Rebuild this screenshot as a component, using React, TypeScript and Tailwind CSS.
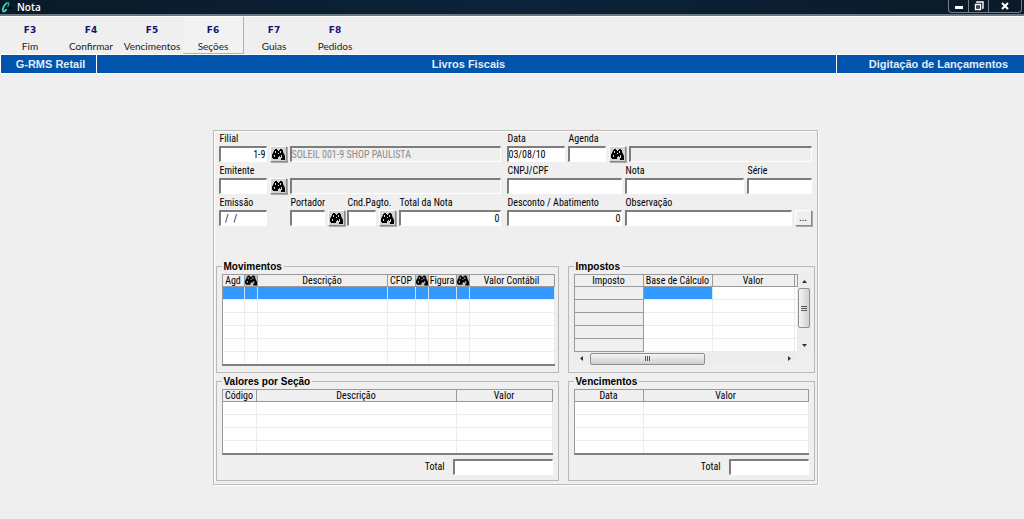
import type { ReactNode } from "react";

const actions = [
  { shortcut: "F3", label: "Fim" },
  { shortcut: "F4", label: "Confirmar" },
  { shortcut: "F5", label: "Vencimentos" },
  { shortcut: "F6", label: "Seções", raised: true },
  { shortcut: "F7", label: "Guias" },
  { shortcut: "F8", label: "Pedidos" },
];

const Binoculars = () => (
  <svg viewBox="0 0 13 11" className="block h-[11px] w-[13px]" aria-hidden="true">
    <path
      d="M3 0h2v1h1v1h1V1h1V0h2v1h1v2l1 2 1 2v4H9V8H8V7H7v1H6v2H1V9H0V6l1-2 1-2V1h1z"
      fill="#000"
    />
    <path
      d="M3.500 2v2M8.500 2v2M2.500 6v2M9.500 6v3M6 4.500h1"
      stroke="#d8d8d8"
      strokeWidth="1"
      fill="none"
    />
  </svg>
);

const SearchButton = ({ label }: { label: string }) => (
  <button
    type="button"
    aria-label={label}
    className="flex h-4 w-[17px] shrink-0 items-center justify-center border border-t-white border-l-white border-r-[#8a8a8a] border-b-[#8a8a8a] bg-[#d2d2d2] shadow-[1px_1px_0_#aaa]"
  >
    <Binoculars />
  </button>
);

type FieldProps = {
  id: string;
  label?: string;
  name?: string;
  value?: string;
  className?: string;
  right?: boolean;
  disabled?: boolean;
};

const Field = ({ id, label, name, value, className, right, disabled }: FieldProps) => (
  <div className={`flex min-w-0 flex-col ${className}`}>
    {label && (
      <label htmlFor={id} className="h-[13px] pl-px leading-3 whitespace-nowrap">
        {label}
      </label>
    )}
    <input
      id={id}
      aria-label={label ? undefined : name}
      defaultValue={value}
      disabled={disabled}
      className={`h-4 w-full min-w-0 border-t-2 border-l-2 border-r border-b border-t-[#7d7d7d] border-l-[#7d7d7d] border-r-white border-b-white leading-3 outline-none ${
        right ? "text-right" : "text-left"
      } ${disabled ? "bg-[#efefef] text-[#8c8c8c]" : "bg-white"}`}
    />
  </div>
);

const Group = ({ title, children, className }: { title: string; children: ReactNode; className: string }) => (
  <fieldset className={`min-w-0 border border-[#b9b9b9] px-[5px] pt-0.5 ${className}`}>
    <legend className="bg-[#efefef] px-0.5 font-[Liberation_Sans,sans-serif] text-[10px] leading-[11px] font-bold">
      {title}
    </legend>
    {children}
  </fieldset>
);

type GridProps = {
  name: string;
  columns: { title: string; width: string; search?: boolean }[];
  rows: number;
  selectedRow?: boolean;
  selectedCell?: boolean;
};

const Grid = ({ name, columns, rows, selectedRow, selectedCell }: GridProps) => (
  <table
    aria-label={name}
    className="w-full table-fixed border-separate border-spacing-0 border-t border-l border-[#9a9a9a] bg-white"
  >
    <thead>
      <tr>
        {columns.map((c, i) => (
          <th
            key={i}
            className={`h-3 border-r border-b border-[#9a9a9a] bg-[#efefef] p-0 text-center leading-[11px] font-normal whitespace-nowrap ${c.width}`}
          >
            {c.search ? (
              <button type="button" aria-label="Pesquisar" className="flex h-[11px] w-full justify-center bg-[#c8c8c8]">
                <Binoculars />
              </button>
            ) : (
              c.title
            )}
          </th>
        ))}
      </tr>
    </thead>
    <tbody>
      {Array.from({ length: rows }).map((_, r) => (
        <tr key={r}>
          {columns.map((_, i) => {
            let style = "border-[#ececec]";
            if (r === 0 && (selectedRow || (selectedCell && i === 1))) {
              style = "border-r-[#cfe4fb] border-b-[#ececec] bg-[#3399ff]";
            } else if (selectedCell && i === 0) {
              style = "border-[#9a9a9a] bg-[#efefef]";
            }
            const last = r === rows - 1 && !selectedCell;
            return (
              <td key={i} className={`border-r p-0 ${last ? "h-3" : "h-[13px] border-b"} ${style}`} />
            );
          })}
        </tr>
      ))}
    </tbody>
  </table>
);

const Total = ({ id, width }: { id: string; width: string }) => (
  <div className="mt-1 flex items-center justify-end gap-2">
    <label htmlFor={id}>Total</label>
    <input
      id={id}
      className={`h-4 border-t-2 border-l-2 border-r border-b border-t-[#7d7d7d] border-l-[#7d7d7d] border-r-white border-b-white bg-white outline-none ${width}`}
    />
  </div>
);

const Arrow = ({ d }: { d: string }) => (
  <svg viewBox="0 0 7 7" className="h-[7px] w-[7px] shrink-0" aria-hidden="true">
    <path d={d} fill="#333" />
  </svg>
);

const TitleBar = () => (
  <header className="flex h-[17px] items-start border-b border-white bg-[#0b1d2e] bg-linear-to-r from-[#0a1a29] via-[#0b2338] to-[#0a1a29] text-white">
    <div className="flex h-4 w-full items-start border-b-2 border-[#6c7780]">
      <svg viewBox="0 0 12 14" className="ml-px h-[14px] w-3" aria-hidden="true">
        <path d="M6 3C4 4 1 8 2 11c1 1 3 0 3-2" fill="none" stroke="#35dcc0" strokeWidth="1.8" />
        <path d="M6 3c2-1 2 1 1 4" fill="none" stroke="#1fb39e" strokeWidth="1.5" />
        <path d="M8 5l4 4H7z" fill="#02080c" />
      </svg>
      <span className="ml-1 text-[10px] leading-[15px] font-semibold">Nota</span>
      <div className="mr-0.5 ml-auto flex h-[13px] rounded-b-sm border border-t-0 border-[#71808c]">
        <button type="button" aria-label="Minimizar" className="flex w-5 items-center justify-center border-r border-[#71808c]">
          <svg viewBox="0 0 10 10" className="h-[10px] w-[10px]">
            <path d="M1 5h8v3H1z" fill="#fff" />
          </svg>
        </button>
        <button type="button" aria-label="Restaurar" className="flex w-5 items-center justify-center border-r border-[#71808c]">
          <svg viewBox="0 0 10 10" className="h-[10px] w-[10px]">
            <path d="M3 2V1h6v6H8M1.500 3.500h5v5h-5z" fill="none" stroke="#fff" strokeWidth="1.4" />
            <path d="M3.500 5.500h1v1h-1z" fill="#fff" />
          </svg>
        </button>
        <button type="button" aria-label="Fechar" className="flex w-8 items-center justify-center">
          <svg viewBox="0 0 10 10" className="h-[10px] w-[10px]">
            <path d="M2 2l6 6M8 2L2 8" stroke="#fff" strokeWidth="2" />
          </svg>
        </button>
      </div>
    </div>
  </header>
);

const App = () => {
  return (
    <div className="min-h-screen bg-[#efefef] font-[Open_Sans,sans-serif] text-black">
      <TitleBar />

      <nav className="flex h-[37px]">
        {actions.map((a) => (
          <button
            key={a.shortcut}
            type="button"
            className={`flex w-[61px] flex-col items-center border-r border-b pt-[7px] text-[#222] ${
              a.raised ? "border-[#b0b0b0] bg-[#f2f2f2]" : "border-transparent"
            }`}
          >
            <span className="font-[DejaVu_Sans,sans-serif] text-[9px] leading-3 font-bold text-[#14146e]">
              {a.shortcut}
            </span>
            <span className="mt-1 font-[Lato,sans-serif] text-[10px] leading-3">{a.label}</span>
          </button>
        ))}
      </nav>

      <div className="flex h-5 border-y border-white bg-[#0054ab] text-center font-[Liberation_Sans,sans-serif] text-[11px] leading-[19px] font-bold text-[#e2ecf8]">
        <div className="w-[97px] border-x border-white pl-1">G-RMS Retail</div>
        <div className="flex-1 pl-1">Livros Fiscais</div>
        <div className="w-[188px] border-l border-white pl-4">Digitação de Lançamentos</div>
      </div>

      <main className="flex justify-center pt-14 pl-1.5 font-[Roboto_Condensed,Lato,sans-serif] text-[10px] leading-3">
        <form className="w-full max-w-[605px] border border-[#b9b9b9] px-0.5 pt-0.5 pb-[3px] shadow-[1px_1px_0_#fff,inset_1px_1px_0_#fff]">
          <div className="flex flex-col gap-[3px] px-[3px]">
            <div className="flex items-end">
              <Field id="filial" label="Filial" value="1-9" right className="w-12" />
              <div className="ml-[3px]">
                <SearchButton label="Pesquisar filial" />
              </div>
              <Field id="filial-nome" name="Nome da filial" value="SOLEIL 001-9 SHOP PAULISTA" disabled className="ml-[3px] flex-1" />
              <Field id="data" label="Data" value="03/08/10" className="ml-1.5 w-[58px]" />
              <Field id="agenda" label="Agenda" className="ml-[3px] w-[38px]" />
              <div className="ml-[3px]">
                <SearchButton label="Pesquisar agenda" />
              </div>
              <Field id="agenda-nome" name="Descrição da agenda" disabled className="ml-[3px] w-[183px]" />
            </div>

            <div className="flex items-end">
              <Field id="emitente" label="Emitente" className="w-12" />
              <div className="ml-[3px]">
                <SearchButton label="Pesquisar emitente" />
              </div>
              <Field id="emitente-nome" name="Nome do emitente" disabled className="ml-[3px] flex-1" />
              <Field id="cnpj" label="CNPJ/CPF" className="ml-1.5 w-[115px]" />
              <Field id="nota" label="Nota" className="ml-[3px] w-[119px]" />
              <Field id="serie" label="Série" className="ml-[3px] w-[65px]" />
            </div>

            <div className="flex items-end">
              <Field id="emissao" label="Emissão" value="  /  /" className="w-12" />
              <Field id="portador" label="Portador" className="ml-[23px] w-[35px]" />
              <div className="ml-[3px]">
                <SearchButton label="Pesquisar portador" />
              </div>
              <Field id="cnd" label="Cnd.Pagto." className="ml-0.5 w-[29px]" />
              <div className="ml-[3px]">
                <SearchButton label="Pesquisar condição de pagamento" />
              </div>
              <Field id="total-nota" label="Total da Nota" value="0" right className="ml-[3px] flex-1" />
              <Field id="desconto" label="Desconto / Abatimento" value="0" right className="ml-1.5 w-[115px]" />
              <Field id="observacao" label="Observação" className="ml-[3px] w-[167px]" />
              <button
                type="button"
                aria-label="Editar observação"
                className="ml-[3px] h-4 w-[17px] border border-t-white border-l-white border-r-[#8a8a8a] border-b-[#8a8a8a] bg-[#efefef] leading-3 shadow-[1px_1px_0_#aaa]"
              >
                ...
              </button>
            </div>
          </div>

          <div className="mt-[35px] grid grid-cols-[343fr_247fr] gap-x-[9px] gap-y-[3px]">
            <Group title="Movimentos" className="pr-[3px] pb-1.5">
              <div className="border-b-2 border-[#808080]">
                <Grid
                  name="Movimentos"
                  rows={6}
                  selectedRow
                  columns={[
                    { title: "Agd", width: "w-[22px]" },
                    { title: "", width: "w-[13px]", search: true },
                    { title: "Descrição", width: "w-auto" },
                    { title: "CFOP", width: "w-7" },
                    { title: "", width: "w-[13px]", search: true },
                    { title: "Figura", width: "w-7" },
                    { title: "", width: "w-[13px]", search: true },
                    { title: "Valor Contábil", width: "w-[85px]" },
                  ]}
                />
              </div>
            </Group>

            <Group title="Impostos" className="pr-[3px]">
              <div className="grid grid-cols-[1fr_13px]">
                <Grid
                  name="Impostos"
                  rows={5}
                  selectedCell
                  columns={[
                    { title: "Imposto", width: "w-[69px]" },
                    { title: "Base de Cálculo", width: "w-[69px]" },
                    { title: "Valor", width: "w-auto" },
                    { title: "", width: "w-[3px]" },
                  ]}
                />
                <div className="flex flex-col items-center bg-[#ededed]">
                  <div className="flex h-[14px] items-center">
                    <Arrow d="M1 5l2.500-3L6 5z" />
                  </div>
                  <div className="flex h-10 w-3 flex-col items-center justify-center gap-px rounded-xs border border-[#8f8f8f] bg-linear-to-r from-[#f5f5f5] to-[#cfcfcf]">
                    <i className="h-px w-1.5 bg-[#555]" />
                    <i className="h-px w-1.5 bg-[#555]" />
                    <i className="h-px w-1.5 bg-[#555]" />
                  </div>
                  <div className="mt-auto flex h-[14px] items-center">
                    <Arrow d="M1 2h5L3.500 5z" />
                  </div>
                </div>
                <div className="flex h-[13px] items-center bg-[#ededed]">
                  <div className="flex w-4 justify-center">
                    <Arrow d="M5 1v5L2 3.500z" />
                  </div>
                  <div className="flex h-3 w-[115px] items-center justify-center gap-px rounded-xs border border-[#8f8f8f] bg-linear-to-b from-[#f5f5f5] to-[#cfcfcf]">
                    <i className="h-[5px] w-px bg-[#555]" />
                    <i className="h-[5px] w-px bg-[#555]" />
                    <i className="h-[5px] w-px bg-[#555]" />
                  </div>
                  <div className="ml-auto flex w-4 justify-center">
                    <Arrow d="M2 1v5l3-2.500z" />
                  </div>
                </div>
                <div className="bg-[#efefef]" />
              </div>
            </Group>

            <Group title="Valores por Seção" className="pb-[5px]">
              <div className="border-b-2 border-[#808080]">
                <Grid
                  name="Valores por Seção"
                  rows={4}
                  columns={[
                    { title: "Código", width: "w-[34px]" },
                    { title: "Descrição", width: "w-auto" },
                    { title: "Valor", width: "w-24" },
                  ]}
                />
              </div>
              <Total id="total-secao" width="w-[100px]" />
            </Group>

            <Group title="Vencimentos" className="pb-[5px]">
              <div className="border-b-2 border-[#808080]">
                <Grid
                  name="Vencimentos"
                  rows={4}
                  columns={[
                    { title: "Data", width: "w-[69px]" },
                    { title: "Valor", width: "w-auto" },
                  ]}
                />
              </div>
              <Total id="total-vencimentos" width="w-20" />
            </Group>
          </div>
        </form>
      </main>
    </div>
  );
};

export default App;
